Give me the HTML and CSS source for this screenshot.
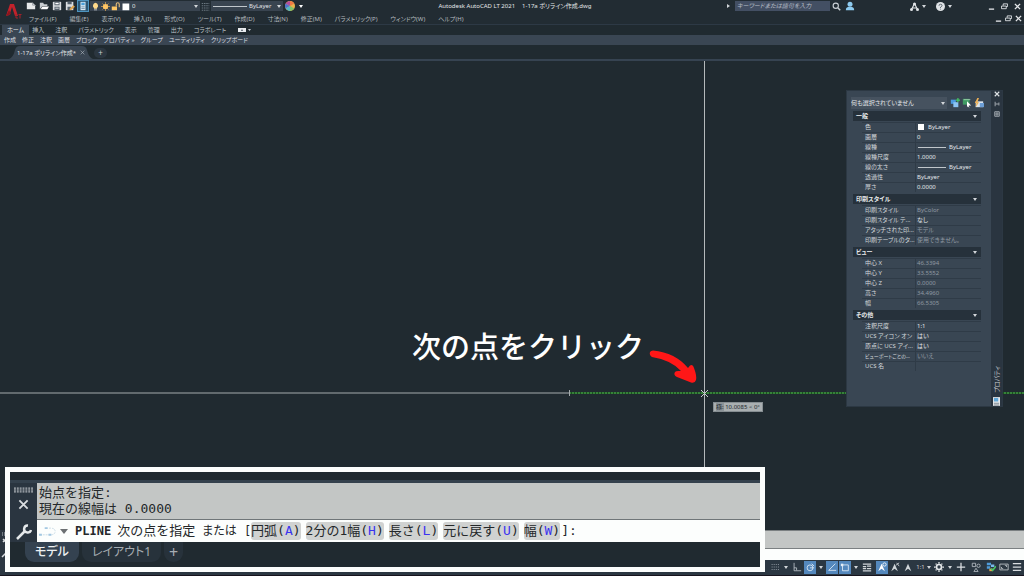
FILE: index.html
```html
<!DOCTYPE html>
<html lang="ja">
<head>
<meta charset="utf-8">
<title>Autodesk AutoCAD LT 2021 - 1-17a ポリライン作成.dwg</title>
<link rel="stylesheet" href="styles.css">
</head>
<body>
<header class="top">
  <svg class="logo" viewBox="0 0 20 20"><path d="M4 16 8 4h4l4 12h-3l-3-9-2.500 8z" fill="#c3222b"/><path d="M4 16 7 10l2 4z" fill="#8d151d"/><path d="M14 14v4h2M16.500 14.500h3M18 14.500v4" stroke="#a3212a" stroke-width="1" fill="none"/></svg>
  <div class="top-rows">
    <div class="titlebar">
      <div class="quick">
        <button class="tool" aria-label="新規"><svg viewBox="0 0 12 12"><path d="M1 2h7l3 3v5H1z" fill="#e6e8ea"/><path d="M8 2v3h3" stroke="#8b939a" fill="none"/></svg></button>
        <button class="tool" aria-label="開く"><svg viewBox="0 0 12 12"><path d="M1 10V2h4l1 2h4v2H4z" fill="#c9cdd1"/><path d="m4 6.500h8L10 10H2z" fill="#fff"/></svg></button>
        <button class="tool" aria-label="保存"><svg viewBox="0 0 12 12"><path d="M1 1h10v10H1z" fill="#d9dcdf"/><path d="M3 1h6v4H3zM3 7h6v4H3z" fill="#54606c"/><path d="M4 8h4v1H4zM4 2h4v2H4z" fill="#fff"/></svg></button>
        <button class="tool" aria-label="名前を付けて保存"><svg viewBox="0 0 12 12"><path d="M1 1h9v10H1z" fill="#d9dcdf"/><path d="M3 1h5v3H3zM3 7h4v4H3z" fill="#54606c"/><path d="m5 10 5-5 2 2-5 4z" fill="#dda54f"/></svg></button>
        <button class="tool active" aria-label="電卓"><svg viewBox="0 0 12 12"><path d="M3 1h6v10H3z" fill="#dcebf5"/><path d="M4 2h4v3H4z" fill="#4a9fd8"/><path d="M4 7h4M4 9h4" stroke="#6d8ea8"/></svg></button>
      </div>
      <div class="combo layer">
        <svg class="ic" viewBox="0 0 12 12"><path d="M6 1a4 4 0 0 1 2 7v1H4V8a4 4 0 0 1 2-7z" fill="#ffd98a"/><path d="M4 10h4v1H4z" fill="#ddd"/></svg>
        <svg class="ic" viewBox="0 0 12 12"><path d="M6 0v12M0 6h12M2 2l8 8M10 2l-8 8" stroke="#d9a452"/><circle cx="6" cy="6" r="3.500" fill="#ffc564"/></svg>
        <svg class="ic" viewBox="0 0 12 12"><path d="M1 6h7v5H1z" fill="#ffc765"/><path d="M7 6V3q0-2 2-2t2 2v4" stroke="#e6bd78" stroke-width="1.500" fill="none"/></svg>
        <svg class="ic" viewBox="0 0 12 12"><path d="M2 2h9v9H2z" fill="#fff"/></svg>
        <select aria-label="画層"><option>0</option></select><i class="caret"></i>
      </div>
      <svg class="ic" viewBox="0 0 12 12"><path d="M1 2h10M1 5h10M1 8h10M1 11h10" stroke="#83909b" stroke-dasharray="2 1"/></svg>
      <div class="combo ltype"><span class="sample"></span><select aria-label="線種"><option>ByLayer</option></select><i class="caret"></i></div>
      <svg class="wheel" viewBox="0 0 12 12"><circle cx="6" cy="6" r="6" fill="#e9b44c"/><path d="M6 6V0a6 6 0 0 1 5.200 3z" fill="#ef7a45"/><path d="M6 6 .8 3A6 6 0 0 1 6 0z" fill="#b34ca0"/><path d="M6 6 .8 9a6 6 0 0 1 0-6z" fill="#4d74ce"/><path d="M6 6 .8 9A6 6 0 0 0 6 12z" fill="#52b8c6"/><path d="M6 6v6a6 6 0 0 0 5.200-3z" fill="#7fc26b"/></svg>
      <i class="caret over"></i>
      <h1 class="title"><span>Autodesk AutoCAD LT 2021</span><span>1-17a ポリライン作成.dwg</span></h1>
      <div class="help">
        <i class="caret right"></i>
        <input class="search" type="text" placeholder="キーワードまたは語句を入力" aria-label="検索">
        <svg class="ic" viewBox="0 0 12 12"><circle cx="5" cy="5" r="3.500" stroke="#c9cfd4" stroke-width="1.500" fill="none"/><path d="m8 8 3 3" stroke="#c9cfd4" stroke-width="2"/></svg>
        <svg class="ic user" viewBox="0 0 12 12"><circle cx="6" cy="4" r="3" fill="#8ecbf0"/><path d="M1 11q0-4 5-4t5 4z" fill="#8ecbf0"/></svg>
        <svg class="ic" viewBox="0 0 12 12"><path d="M6 2 2 10M6 2l4 8M3 8h6" stroke="#e2e5e8" stroke-width="1.500"/><circle cx="6" cy="2.500" r="2" fill="#e2e5e8"/><circle cx="2" cy="10" r="2" fill="#e2e5e8"/><circle cx="10" cy="10" r="2" fill="#e2e5e8"/></svg>
        <i class="caret small"></i>
        <svg class="ic q" viewBox="0 0 12 12"><circle cx="6" cy="6" r="6" fill="#dfe3e6"/><path d="M4 5q0-2 2-2t2 1.500Q8 6 6 7v1M6 9v1" stroke="#39444e" fill="none"/></svg>
        <i class="caret small"></i>
      </div>
      <div class="win">
        <button aria-label="最小化"><svg viewBox="0 0 8 8"><path d="M1 7h6" stroke="#e4e7ea" stroke-width="1.500"/></svg></button>
        <button aria-label="元に戻す"><svg viewBox="0 0 8 8"><path d="M2.500 3V1h5v3H6M.5 3.500H6v3H.5z" stroke="#e4e7ea" fill="none"/></svg></button>
        <button aria-label="閉じる"><svg viewBox="0 0 8 8"><path d="m1 1 6 6M7 1 1 7" stroke="#e4e7ea" stroke-width="1.500"/></svg></button>
      </div>
    </div>
    <nav class="menubar">
      <a href="#">ファイル(F)</a><a href="#">編集(E)</a><a href="#">表示(V)</a><a href="#">挿入(I)</a><a href="#">形式(O)</a><a href="#">ツール(T)</a><a href="#">作成(D)</a><a href="#">寸法(N)</a><a href="#">修正(M)</a><a href="#">パラメトリック(P)</a><a href="#">ウィンドウ(W)</a><a href="#">ヘルプ(H)</a>
      <div class="win inner">
        <button aria-label="図面を最小化"><svg viewBox="0 0 8 8"><path d="M1 7h6" stroke="#e4e7ea" stroke-width="1.500"/></svg></button>
        <button aria-label="図面を元に戻す"><svg viewBox="0 0 8 8"><path d="M2.500 3V1h5v3H6M.5 3.500H6v3H.5z" stroke="#e4e7ea" fill="none"/></svg></button>
        <button aria-label="図面を閉じる"><svg viewBox="0 0 8 8"><path d="m1 1 6 6M7 1 1 7" stroke="#e4e7ea" stroke-width="1.500"/></svg></button>
      </div>
    </nav>
  </div>
</header>
<nav class="ribbon">
  <a class="on" href="#">ホーム</a><a href="#">挿入</a><a href="#">注釈</a><a href="#">パラメトリック</a><a href="#">表示</a><a href="#">管理</a><a href="#">出力</a><a href="#">コラボレート</a>
  <button class="mini" aria-label="リボンの表示"><svg viewBox="0 0 14 6"><path d="M0 1h8v4H0z" fill="#e8ebee"/><path d="m3 4 1-2 1 2z" fill="#45505c"/><path d="M10 2h3l-1.500 2z" fill="#c7ccd1"/></svg></button>
</nav>
<div class="panels">
  <button>作成</button><button>修正</button><button>注釈</button><button>画層</button><button>ブロック</button><button>プロパティ <small>»</small></button><button>グループ</button><button>ユーティリティ</button><button>クリップボード</button>
</div>
<nav class="docs">
  <a class="doc" href="#"><svg class="tabshape" viewBox="0 0 84 13" preserveAspectRatio="none"><path d="M0 13Q4 12 6 4 7 0 11 0H73q4 0 5 4 2 8 6 9z" fill="#394552"/></svg><span>1-17a ポリライン作成*</span><svg class="x" viewBox="0 0 8 8"><path d="m1 1 6 6M7 1 1 7" stroke="#aeb6bd"/></svg></a>
  <button class="add" aria-label="新しい図面">+</button>
</nav>
<main class="canvas">
  <svg class="drawing">
    <path d="M0 332H569" stroke="#a4aaac"/>
    <path d="M569 332H1600" stroke="#1c4f20" stroke-width="2"/>
    <path d="M569 332H1600" stroke="#51b554" stroke-dasharray="2 1"/>
    <path d="M569.500 329v6" stroke="#a4aaac"/>
    <path d="M704.500 0V900" stroke="#b4b9bb"/>
    <path d="m701 329 7 7m0-7-7 7" stroke="#c9cdcf"/>
    <path d="M653 289.500C668 291 680 297 688 307L690 304.500Q693 303 694 307 697 315 696 319 695 322.500 691 321.500L677 316Q673 314 675 311 676 309.500 680 310L681 310Q671 299 652 296 649 294 650 291 651 289.500 653 289.500z" fill="#ff1717"/>
  </svg>
  <p class="callout">次の点をクリック</p>
  <div class="tip"><b>極:</b> 10.0085 &lt; 0°</div>
  <aside class="palette">
    <div class="pbody">
      <div class="pick">
        <div class="combo what"><select aria-label="選択"><option>何も選択されていません</option></select><i class="caret"></i></div>
        <button class="tool" aria-label="PICKADD"><svg viewBox="0 0 12 12"><path d="M1 2h6v5H1z" fill="#4d9be0"/><path d="M4 5h6v6H4z" fill="#8bc3f2"/><path d="M9.500 0v5M7 2.500h5" stroke="#45c566" stroke-width="1.500"/></svg></button>
        <button class="tool" aria-label="オブジェクトを選択"><svg viewBox="0 0 12 12"><path d="M1 1h8v7H1z" fill="#3f9b63"/><path d="M2 2h8" stroke="#a5d3b2"/><path d="m6 4 5 5H8l1 3-2-2-1 1z" fill="#fff"/></svg></button>
        <button class="tool" aria-label="クイック選択"><svg viewBox="0 0 12 12"><path d="M2 4h9v7H2z" fill="#dce5ee"/><path d="M7 6h5v5H7z" fill="#6d9ed5"/><path d="m4 0-3 6h2l-1 5 4-6H4l2-5z" fill="#f0b154"/></svg></button>
      </div>
      <section><h2>一般<i class="caret"></i></h2>
        <table>
          <tr><th>色</th><td><i class="swatch"></i>ByLayer</td></tr>
          <tr><th>画層</th><td>0</td></tr>
          <tr><th>線種</th><td><i class="line"></i>ByLayer</td></tr>
          <tr><th>線種尺度</th><td>1.0000</td></tr>
          <tr><th>線の太さ</th><td><i class="line"></i>ByLayer</td></tr>
          <tr><th>透過性</th><td>ByLayer</td></tr>
          <tr><th>厚さ</th><td>0.0000</td></tr>
        </table></section>
      <section><h2>印刷スタイル<i class="caret"></i></h2>
        <table>
          <tr><th>印刷スタイル</th><td class="dim">ByColor</td></tr>
          <tr><th>印刷スタイル テ...</th><td>なし</td></tr>
          <tr><th>アタッチされた印...</th><td class="dim">モデル</td></tr>
          <tr><th>印刷テーブルのタ...</th><td class="dim">使用できません。</td></tr>
        </table></section>
      <section><h2>ビュー<i class="caret"></i></h2>
        <table>
          <tr><th>中心 X</th><td class="dim">46.3394</td></tr>
          <tr><th>中心 Y</th><td class="dim">33.5552</td></tr>
          <tr><th>中心 Z</th><td class="dim">0.0000</td></tr>
          <tr><th>高さ</th><td class="dim">34.4960</td></tr>
          <tr><th>幅</th><td class="dim">66.5305</td></tr>
        </table></section>
      <section><h2>その他<i class="caret"></i></h2>
        <table>
          <tr><th>注釈尺度</th><td>1:1</td></tr>
          <tr><th>UCS アイコン オン</th><td>はい</td></tr>
          <tr><th>原点に UCS アイ...</th><td>はい</td></tr>
          <tr><th class="long">ビューポートごとの...</th><td class="dim">いいえ</td></tr>
          <tr><th>UCS 名</th><td></td></tr>
        </table></section>
    </div>
    <div class="pstrip">
      <button aria-label="パレットを閉じる"><svg viewBox="0 0 8 8"><path d="m1 1 6 6M7 1 1 7" stroke="#dfe3e6" stroke-width="1.500"/></svg></button>
      <button aria-label="自動的に隠す"><svg viewBox="0 0 8 8"><path d="M1.500 1v6M2 4h4M6.500 2v4" stroke="#c5cbd0" fill="none"/></svg></button>
      <button aria-label="設定"><svg viewBox="0 0 8 8"><path d="M1 1h6v6H1z" stroke="#c5cbd0" fill="none"/><circle cx="4" cy="4" r="1.500" stroke="#c5cbd0" fill="none"/></svg></button>
      <span class="ptitle">プロパティ</span>
      <svg class="pfoot" viewBox="0 0 8 10"><path d="M0 0h8v10H0z" fill="#e6e9eb"/><path d="M1 1h5v4H1z" fill="#62a8d8"/><path d="M1 7h6M1 9h6" stroke="#75808a"/></svg>
    </div>
  </aside>
</main>
<div class="cmdbar">
  <div class="cmdgrip"><svg viewBox="0 0 12 30"><path d="M2 3h4M2 5h4" stroke="#b9c0c6" stroke-dasharray="1 1"/><path d="m3 9 3 3m0-3-3 3M2 27l5-5" stroke="#d9dde0" stroke-width="1.500"/></svg></div>
  <div class="cmdlines"><div class="hist"></div><div class="entry"></div></div>
</div>
<footer class="status">
  <button aria-label="グリッド"><svg viewBox="0 0 12 12"><path d="M2 3h9M2 6h9M2 9h9" stroke="#b7bec5" stroke-dasharray="1 1.500"/></svg></button>
  <i class="caret"></i>
  <button aria-label="直交"><svg viewBox="0 0 12 12"><path d="M2.500 1v9.500H11M2.500 7h3v3" stroke="#bcc3c9" fill="none"/></svg></button>
  <button class="on" aria-label="極トラッキング"><svg viewBox="0 0 12 12"><circle cx="6" cy="7" r="3.500" stroke="#e3edf7" fill="none"/><path d="M6 7h5M8 2l3 3" stroke="#e3edf7"/></svg></button>
  <i class="caret"></i>
  <button class="on" aria-label="オブジェクト スナップ トラッキング"><svg viewBox="0 0 12 12"><path d="M10 2 2 10h9" stroke="#e3edf7" fill="none"/></svg></button>
  <button class="on" aria-label="オブジェクト スナップ"><svg viewBox="0 0 12 12"><path d="M3 3.500h7v7H3z" stroke="#e3edf7" fill="none"/><path d="M1 2h3v3H1z" fill="#e3edf7"/></svg></button>
  <i class="caret"></i>
  <button aria-label="線の太さ"><svg viewBox="0 0 12 12"><path d="M1 2.500h10M1 5.500h4M6 5h5M1 8h4M6 8h5M1 10.500h10" stroke="#d1d6da" stroke-width="1.500"/></svg></button>
  <span class="sep"></span>
  <button class="on" aria-label="注釈の可視性"><svg viewBox="0 0 12 12"><path d="m1.500 11 4-9 4 9-4-3z" fill="#fff"/><circle cx="9" cy="3" r="2" stroke="#fff" fill="none"/></svg></button>
  <button aria-label="自動尺度"><svg viewBox="0 0 12 12"><path d="m1.500 11 4-9 4 9-4-3z" fill="#d1d6da"/><path d="m7 4 4-3M8 1l3 4" stroke="#d1d6da"/></svg></button>
  <button aria-label="注釈尺度"><svg viewBox="0 0 12 12"><path d="m2 11 4-9 4 9-4-3z" fill="#d1d6da"/></svg></button>
  <button class="scale">1:1<i class="caret"></i></button>
  <button aria-label="ワークスペース"><svg viewBox="0 0 12 12"><circle cx="6" cy="6" r="3" stroke="#e6e9eb" stroke-width="2" fill="none"/><path d="M6 0v2M6 10v2M0 6h2M10 6h2M2 2l1 1M9 9l1 1M10 2 9 3M3 9l-1 1" stroke="#e6e9eb" stroke-width="1.500"/></svg></button>
  <i class="caret"></i>
  <button aria-label="注釈モニター"><svg viewBox="0 0 12 12"><path d="M6 1v10M1 6h10" stroke="#dce0e4" stroke-width="1.500"/></svg></button>
  <span class="sep"></span>
  <button aria-label="オブジェクトを選択表示"><svg viewBox="0 0 12 12"><path d="M1.500 1.500h4v4h-4zM6 7.500l2.500 4h-5z" stroke="#b7bec5" fill="none"/><circle cx="9" cy="4.500" r="2" stroke="#b7bec5" fill="none"/></svg></button>
  <span class="sep"></span>
  <button aria-label="ハードウェア"><svg viewBox="0 0 12 12"><path d="M1 1h5v3H1zM1 5h4v3H1z" fill="#4f9cda"/><path d="M6 3h4v3H6z" fill="#7bb9ea"/><path d="M4 8h4v3H4z" fill="#e3a94c"/><path d="m6 8 2 2 4-5" stroke="#4cc267" stroke-width="2" fill="none"/></svg></button>
  <button aria-label="フルスクリーン"><svg viewBox="0 0 12 12"><path d="M1 2.500h10v7H1z" stroke="#c2c8cd" fill="none"/><path d="M7 4h2v2M3 8V6M3 8h2" stroke="#c2c8cd" fill="none"/></svg></button>
  <button aria-label="カスタマイズ"><svg viewBox="0 0 12 12"><path d="M1 2h10M1 6h10M1 10h10" stroke="#d9dde1" stroke-width="1.500"/></svg></button>
</footer>
<section class="zoombox">
  <div class="zrow">
    <div class="ztools">
      <svg class="grip" viewBox="0 0 20 6"><path d="M0 1h20M0 3h20M0 5h20" stroke="#d9dde0" stroke-width="1" stroke-dasharray="2 1"/></svg>
      <button aria-label="コマンドラインを閉じる"><svg viewBox="0 0 12 12"><path d="m1.500 1.500 9 9m0-9-9 9" stroke="#d9dde0" stroke-width="2"/></svg></button>
      <button class="wrench" aria-label="コマンドの設定"><svg viewBox="0 0 16 16"><path d="M1 15 9 7" stroke="#e6e9eb" stroke-width="2.500"/><path d="M12 1.500A3.500 3.500 0 1 0 15 6" stroke="#e6e9eb" stroke-width="2.500" fill="none"/></svg></button>
    </div>
    <div class="zlines">
      <div class="zhist"><p>始点を指定:</p><p>現在の線幅は 0.0000</p></div>
      <div class="zentry">
        <svg class="pl" viewBox="0 0 20 12"><path d="M1 10h11q5 0 5-3.500T12 3H8" stroke="#c9dbe6" stroke-dasharray="2 1" fill="none"/><path d="M0 9h3v2H0zM6 2h3v2H6zM10 9h3v2h-3z" fill="#a3c8e2"/></svg>
        <i class="caret dark"></i>
        <b>PLINE</b><span>次の点を指定</span><span class="kana">または [</span>
        <button>円弧(<em>A</em>)</button><button>2分の1幅(<em>H</em>)</button><button>長さ(<em>L</em>)</button><button>元に戻す(<em>U</em>)</button><button>幅(<em>W</em>)</button><span class="end">]:</span>
      </div>
    </div>
  </div>
  <nav class="ztabs"><a class="on" href="#">モデル</a><a href="#">レイアウト1</a><a class="plus" href="#">+</a></nav>
</section>
</body>
</html>
```
FILE: styles.css
```css
* { box-sizing: border-box; }
body {
  margin: 0;
  min-height: 100vh;
  display: flex;
  flex-direction: column;
  position: relative;
  overflow: hidden;
  background: #202a30;
  color: #c8cdd2;
  font: 6px/10px "Noto Sans", "Noto Sans CJK JP", sans-serif;
  font-feature-settings: "palt";
}
a { color: inherit; text-decoration: none; }
button, input, select {
  font: inherit;
  font-feature-settings: inherit;
  color: inherit;
  background: none;
  border: 0;
  padding: 0;
  margin: 0;
  min-width: 0;
}
select { appearance: none; flex: 1; }
svg { display: block; }
p, h1, h2 { margin: 0; font-weight: normal; }
button { flex: none; white-space: nowrap; }
.ic { width: 9px; height: 9px; flex: none; }
.caret {
  flex: none;
  width: 4px;
  border: 2px solid transparent;
  border-top: 3px solid #d2d6da;
  border-bottom: 0;
}
.caret.right { border: 2px solid transparent; border-left: 3px solid #d2d6da; border-right: 0; }

.top { display: flex; height: 24px; background: #222c33; }
.logo { width: 20px; height: 20px; margin: 0 6px 0 2px; flex: none; }
.top-rows { flex: 1; min-width: 0; }
.titlebar { display: flex; align-items: center; height: 12px; }
.quick { display: flex; gap: 1px; margin-left: -3px; }
.tool { width: 12px; height: 12px; display: grid; place-items: center; }
.tool svg { width: 10px; height: 10px; }
.tool.active { background: #2c5876; outline: 1px solid #4d94bf; outline-offset: -1px; }
.combo { display: flex; align-items: center; background: #394450; height: 10px; padding-right: 2px; flex: none; }
.layer { width: 110px; gap: 1px; margin: 0 1px; padding-left: 1px; }
.layer select { margin-left: 1px; color: #e0e3e6; }
.ltype { width: 72px; margin: 0 2px 0 1px; color: #e0e3e6; }
.sample { width: 34px; height: 1px; background: #c0c6cb; margin: 0 2px; }
.wheel { width: 10px; height: 10px; flex: none; }
.over { margin-left: 4px; border-top-color: #fff; }
.title { flex: 1; display: flex; gap: 7px; justify-content: center; font-size: 6px; color: #e3e6e9; white-space: nowrap; }
.help { display: flex; align-items: center; flex: none; }
.search { width: 95px; height: 10px; margin: 0 2px 0 4px; padding: 0 2px; background: #434f63; font-style: italic; }
.search::placeholder { color: #b7bec7; }
.user { width: 10px; height: 10px; margin-left: 4px; margin-right: 55px; }
.q { margin-left: 10px; }
.caret.small { margin-left: 3px; }
.win { display: flex; gap: 6px; margin: 0 3px 0 36px; }
.win svg { width: 7px; height: 7px; }
.menubar { display: flex; gap: 13px; align-items: center; height: 13px; padding-left: 1px; color: #b3babf; white-space: nowrap; }
.win.inner { gap: 3px; margin-left: auto; margin-right: 2px; }

.ribbon { display: flex; gap: 11px; height: 11px; padding-left: 2px; border-top: 1px solid #2d3945; align-items: center; white-space: nowrap; color: #bbc1c7; }
.ribbon .on { background: #394552; padding: 0 5px; margin-right: -8px; color: #e6e9eb; }
.mini { margin-left: 1px; }
.mini svg { width: 14px; height: 6px; }
.panels { display: flex; gap: 6px; height: 10px; padding-left: 4px; background: #3a4653; color: #d9dde0; }
.panels small { font-size: 6px; }
.docs { display: flex; align-items: end; gap: 1px; height: 16px; padding-left: 9px; border-bottom: 2px solid #364351; }
.doc { position: relative; display: flex; align-items: center; gap: 4px; height: 13px; padding: 0 8px; color: #e0e3e6; white-space: nowrap; }
.doc span, .doc .x { position: relative; }
.tabshape { position: absolute; inset: 0; width: 100%; height: 100%; }
.x { width: 5px; height: 5px; }
.add { width: 13px; height: 10px; margin-bottom: 1px; border-radius: 5px; background: #2b3640; font-size: 8px; line-height: 8px; }

.canvas { position: relative; flex: 1; min-height: 460px; background: #202a30; overflow: hidden; }
.drawing { position: absolute; inset: 0; width: 100%; height: 100%; }
.callout { position: absolute; left: 412px; top: 264px; font: 500 29px/40px "Noto Sans CJK JP", sans-serif; font-feature-settings: normal; color: #fff; white-space: nowrap; }
.tip { position: absolute; left: 713px; top: 341px; height: 10px; padding: 0 2px; border: 1px solid #868e92; background: #a9afb1; color: #20282c; line-height: 8px; white-space: nowrap; }
.tip b { background: #8c9498; font-weight: normal; }

.palette { position: absolute; right: 21px; top: 29px; display: flex; width: 157px; height: 317px; background: #394653; border: 1px solid #2c3843; }
.pbody { flex: 1; padding: 5px 10px 0 6px; min-width: 0; }
.pick { display: flex; align-items: center; height: 14px; margin: 0 -5px 1px -2px; }
.what { width: 96px; height: 12px; margin-right: 2px; background: #46525f; color: #e3e6e9; }
.pbody section { margin-bottom: 2px; }
.pbody h2 { display: flex; justify-content: space-between; align-items: center; height: 10px; padding: 0 4px 0 3px; font-size: 6px; font-weight: 700; line-height: 10px; background: #26313b; color: #e9ecee; }
.pbody table { width: calc(100% - 9px); margin: 1px 0 0 9px; table-layout: fixed; border-spacing: 0; }
.pbody th, .pbody td { height: 10px; padding: 0; line-height: 9px; border-top: 1px solid #2f3b47; text-align: left; font-weight: normal; white-space: nowrap; color: #d3d8dc; }
.pbody th { width: 54px; border-right: 1px solid #2f3b47; padding-left: 3px; }
.pbody th.long { font-size: 5px; }
.pbody td { padding-left: 1px; color: #e3e6e9; }
.pbody td.dim { color: #8f99a2; }
.swatch { display: inline-block; width: 6px; height: 6px; margin: 0 4px 0 1px; background: #fff; vertical-align: middle; }
.line { display: inline-block; width: 28px; height: 1px; margin: 0 3px 0 1px; background: #c0c6cb; vertical-align: middle; }
.pstrip { width: 11px; display: flex; flex-direction: column; align-items: center; gap: 4px; background: #2a3540; }
.pstrip button svg { width: 6px; height: 6px; }
.ptitle { margin-top: auto; writing-mode: vertical-rl; text-orientation: sideways; transform: rotate(180deg); font-size: 6px; }
.pfoot { width: 7px; height: 9px; }

.cmdbar { display: flex; height: 30px; }
.cmdgrip { width: 12px; background: #2b3640; }
.cmdlines { flex: 1; }
.hist { height: 19px; background: #c3c6c5; border-bottom: 1px solid #7b8082; border-top: 1px solid #7b8082; }
.entry { height: 11px; background: #fcfefd; }
.status { display: flex; justify-content: flex-end; align-items: center; gap: 1px; height: 16px; padding: 0 1px 1px 0; background: #2b3742; border-bottom: 1px solid #17141e; }
.status button { display: flex; align-items: center; justify-content: center; width: 12px; height: 13px; }
.status svg { width: 10px; height: 10px; }
.status .on { background: #5488bd; }
.status > .caret { margin: 0 2px; }
.status .scale { width: 17px; gap: 2px; }
.status .sep { width: 1px; }

.zoombox { position: absolute; left: 5px; right: 259px; bottom: 4px; height: 105px; padding: 8px 0 0; border: 5px solid #fcfefd; background: #202a30; font: 13px/16px "DejaVu Sans Mono", "Noto Sans CJK JP", monospace; font-feature-settings: normal; color: #24282a; white-space: nowrap; }
.zrow { display: flex; border-top: 3px solid #34414d; }
.ztools { width: 27px; display: flex; flex-direction: column; align-items: center; padding: 4px 0 2px; background: #2a3540; }
.grip { width: 19px; height: 6px; margin-bottom: 6px; }
.ztools button svg { width: 11px; height: 11px; }
.ztools .wrench { margin-top: auto; }
.ztools .wrench svg { width: 16px; height: 16px; }
.zlines { flex: 1; min-width: 0; }
.zhist { height: 37px; padding: 2px; background: #c3c6c5; border-bottom: 1px solid #6f7578; }
.zentry { display: flex; align-items: center; height: 22px; padding-left: 2px; background: #fcfefd; }
.zentry .pl { width: 19px; height: 12px; }
.zentry b { font-size: 12px; margin: 0 6px 0 7px; }
.zentry span { margin-right: 7px; }
.zentry .kana { margin-right: 0; font-size: 12px; font-feature-settings: "palt"; }
.zentry button { height: 18px; margin-right: 5px; border-radius: 3px; background: #d0d2d1; }
.zentry .end { margin-left: -4px; }
.zentry em { font-style: normal; color: #3a32f0; }
.caret.dark { width: 8px; border-width: 5px 4px 0; border-top-color: #6c7073; margin-left: 2px; }
.ztabs { display: flex; gap: 3px; height: 20px; padding-left: 15px; font: 12px/20px "Noto Sans", "Noto Sans CJK JP", sans-serif; font-feature-settings: "palt"; color: #a6adb3; }
.ztabs a { padding: 0 10px; border-radius: 0 0 9px 9px; background: #27323b; }
.ztabs .on { background: #344250; color: #eceff1; font-weight: 500; }
.ztabs .plus { padding: 0 5px; font-size: 16px; }
```
